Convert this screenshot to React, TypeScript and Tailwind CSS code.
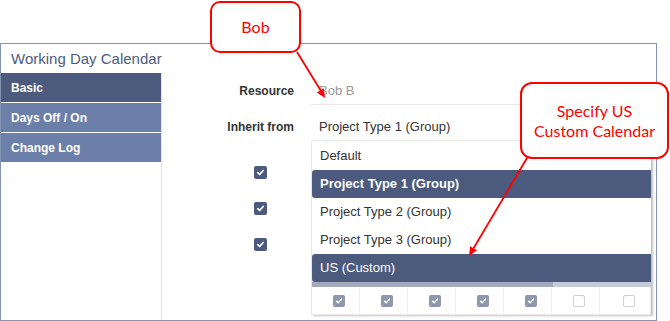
import React from "react";

const NAVY = "bg-[#4b5a7d]";

function Check({ className }: { className?: string }) {
  return (
    <svg viewBox="0 0 12 12" className={className} fill="none">
      <path d="M3 6.2l2 2 4-4.4" stroke="white" strokeWidth="1.8" strokeLinecap="round" strokeLinejoin="round" />
    </svg>
  );
}

function BigBox() {
  return (
    <div className={`w-[13px] h-[13px] rounded-[2px] ${NAVY} flex items-center justify-center`}>
      <Check className="w-[11px] h-[11px]" />
    </div>
  );
}

function SmallBox({ on }: { on: boolean }) {
  return on ? (
    <div className="w-[12px] h-[12px] rounded-[2px] bg-[#8e97ae] flex items-center justify-center">
      <Check className="w-[10px] h-[10px]" />
    </div>
  ) : (
    <div className="w-[12px] h-[12px] rounded-[2px] border border-[#cfcfcf] bg-white" />
  );
}

const options = [
  { label: "Default", active: false, bold: false },
  { label: "Project Type 1 (Group)", active: true, bold: true },
  { label: "Project Type 2 (Group)", active: false, bold: false },
  { label: "Project Type 3 (Group)", active: false, bold: false },
  { label: "US (Custom)", active: true, bold: false },
];

const days = [true, true, true, true, true, false, false];

export default function App() {
  return (
    <div className="relative w-[670px] h-[321px] bg-white overflow-hidden font-['Liberation_Sans',Arial,sans-serif]">
      <div className="mt-[43px] w-[657px] h-[278px] border border-[#8195b2] flex flex-col">
        <div className="h-[29px] px-[10px] text-[15px] leading-[29px] text-[#4d5c82]">Working Day Calendar</div>
        <div className="flex flex-1">
          {/* Sidebar */}
          <div className="w-[161px] border-r border-[#e4e4e4] flex flex-col gap-[1px]">
            {["Basic", "Days Off / On", "Change Log"].map((t, i) => (
              <div
                key={t}
                className={`h-[29px] px-[10px] flex items-center text-[12px] font-bold text-white ${
                  i === 0 ? NAVY : "bg-[#6c7fa8]"
                }`}
              >
                {t}
              </div>
            ))}
          </div>

          {/* Form */}
          <div className="relative flex-1 pt-[4px]">
            <div className="flex flex-col gap-[8px]">
              <div className="flex items-center">
                <div className="w-[132px] text-right text-[12px] font-bold text-[#333]">Resource</div>
                <div className="ml-[17px] w-[339px] h-[28px] border-b border-[#e8e8e8] pl-[8px] flex items-center text-[13px] text-[#9a9a9a]">
                  Bob B
                </div>
              </div>
              <div className="flex items-center">
                <div className="w-[132px] text-right text-[12px] font-bold text-[#333]">Inherit from</div>
                <div className="ml-[17px] w-[339px] h-[28px] border-b border-[#e8e8e8] pl-[8px] flex items-center text-[13px] text-[#333]">
                  Project Type 1 (Group)
                </div>
              </div>
            </div>
            <div className="mt-[13px] flex flex-col">
              {[0, 1, 2].map((i) => (
                <div key={i} className="h-[36px] w-[132px] flex items-center justify-end pr-[27px]">
                  <BigBox />
                </div>
              ))}
            </div>

            {/* Open dropdown */}
            <div className="absolute left-[149px] top-[69px] w-[340px] border-l border-[#e6e6e6] shadow-[2px_1px_2px_rgba(0,0,0,0.25)] bg-white">
              {options.map((o) => (
                <div
                  key={o.label}
                  className={`h-[28px] pl-[8px] flex items-center text-[13px] ${
                    o.active ? `${NAVY} text-white rounded-l-[3px]` : "text-[#333]"
                  } ${o.bold ? "font-bold" : ""}`}
                >
                  {o.label}
                </div>
              ))}
              <div className="h-[5px] flex">
                <div className="w-[241px] bg-[#a1a9bb]" />
                <div className="flex-1 bg-[#c4cad7]" />
              </div>
              <div className="h-[28px] flex border-b border-r border-[#ececec]">
                {days.map((on, i) => (
                  <div
                    key={i}
                    className={`w-[48px] pl-[7px] flex items-center justify-center ${i < 6 ? "border-r border-[#efefef]" : "flex-1"}`}
                  >
                    <SmallBox on={on} />
                  </div>
                ))}
              </div>
            </div>
          </div>
        </div>
      </div>

      {/* Callouts */}
      <div className="absolute left-[210px] top-[1px] w-[91px] h-[52px] border-2 border-[#ff0000] rounded-[10px] bg-white flex items-center justify-center text-[#ff0000] text-[16px] font-['Lato',sans-serif]">
        Bob
      </div>
      <div className="absolute left-[520px] top-[82px] w-[149px] h-[77px] border-2 border-[#ff0000] rounded-[12px] bg-white flex flex-col items-center justify-center text-[#ff0000] text-[16px] leading-[20px] font-['Lato',sans-serif]">
        <span>Specify US</span>
        <span>Custom Calendar</span>
      </div>

      <svg className="absolute inset-0 pointer-events-none" width="670" height="321">
        <line x1="297" y1="52" x2="321" y2="91" stroke="#ff0000" strokeWidth="1.8" />
        <polygon points="325,98 316.9,92.4 323.7,88.2" fill="#ff0000" />
        <line x1="527" y1="158" x2="473.6" y2="248.3" stroke="#ff0000" strokeWidth="1.8" />
        <polygon points="469,256 470.1,246.2 477,250.3" fill="#ff0000" />
      </svg>
    </div>
  );
}
